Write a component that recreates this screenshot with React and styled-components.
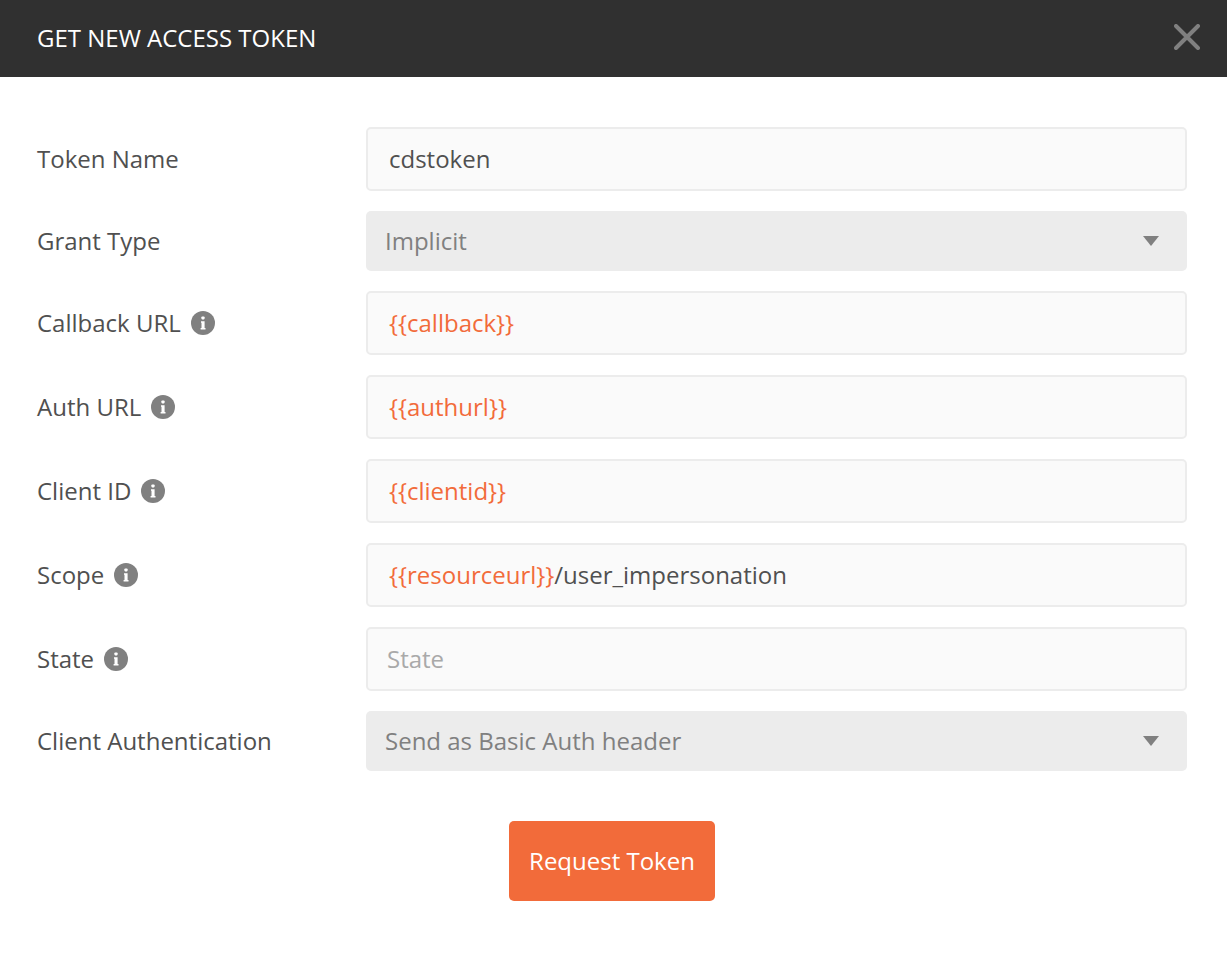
import React from "react";
import styled, { createGlobalStyle } from "styled-components";

const Global = createGlobalStyle`
  html, body { margin: 0; padding: 0; background: #fff; }
  body { font-family: "Open Sans", "Liberation Sans", sans-serif; }
`;
const Page = styled.div`
  width: 1227px;
  height: 977px;
  overflow: hidden;
  background: #fff;
`;
const Header = styled.header`
  height: 77px;
  background: #303030;
  display: flex;
  align-items: center;
  justify-content: space-between;
  padding: 0 27px 0 37px;
`;
const Title = styled.h1`
  margin: 0 0 2px;
  font-size: 24px;
  font-weight: 400;
  color: #fff;
  text-transform: uppercase;
`;
const Close = styled.button`
  border: 0;
  padding: 0;
  margin-bottom: 3px;
  background: none;
  width: 26px;
  height: 26px;
  display: flex;
  svg { display: block; }
`;
const Form = styled.form`
  padding: 50px 40px 0 37px;
  display: flex;
  flex-direction: column;
  gap: 20px;
`;
const Row = styled.div`
  display: grid;
  grid-template-columns: 329px 821px;
  align-items: center;
`;
const Label = styled.div`
  display: flex;
  align-items: center;
  gap: 10px;
  font-size: 24px;
  color: #505050;
`;
const LabelText = styled.span`
  margin-bottom: 2px;
`;
const Info = styled.span`
  width: 24px;
  height: 24px;
  svg { display: block; }
`;
const Field = styled.div`
  box-sizing: border-box;
  height: 64px;
  padding: 0 20px 2px 21px;
  display: flex;
  align-items: center;
  background: #fafafa;
  border: 2px solid #ececec;
  border-radius: 5px;
  font-size: 24px;
  color: #505050;
  white-space: pre;
`;
const Variable = styled.span`
  color: #f26b3a;
`;
const Placeholder = styled.span`
  margin-left: -2px;
  color: #a9a9a9;
`;
const Select = styled.div`
  box-sizing: border-box;
  height: 60px;
  padding: 0 28px 2px 19px;
  display: flex;
  align-items: center;
  justify-content: space-between;
  background: #ececec;
  border-radius: 5px;
  font-size: 24px;
  color: #808080;
`;
const Caret = styled.span`
  width: 0;
  height: 0;
  margin-top: 2px;
  border-left: 8px solid transparent;
  border-right: 8px solid transparent;
  border-top: 10px solid #808080;
`;
const Actions = styled.div`
  display: flex;
  justify-content: center;
  margin-top: 30px;
`;
const Submit = styled.button`
  width: 206px;
  height: 80px;
  border: 0;
  border-radius: 5px;
  background: #f26b3a;
  color: #fff;
  font-family: inherit;
  font-size: 24px;
  padding: 0 0 2px;
`;

const InfoIcon = () => (
  <Info>
    <svg width="24" height="24" viewBox="0 0 24 24">
      <circle cx="12" cy="12" r="12" fill="#808080" />
      <rect x="10.4" y="5.4" width="3.2" height="3" rx="0.8" fill="#fff" />
      <path d="M10 10.2h3.6v6.8h.9v1.6H9.6V17h.9v-5.2H10z" fill="#fff" />
    </svg>
  </Info>
);

const rows = [
  { label: "Token Name", value: <>cdstoken</> },
  { label: "Grant Type", select: "Implicit" },
  { label: "Callback URL", info: true, value: <Variable>{"{{callback}}"}</Variable> },
  { label: "Auth URL", info: true, value: <Variable>{"{{authurl}}"}</Variable> },
  { label: "Client ID", info: true, value: <Variable>{"{{clientid}}"}</Variable> },
  {
    label: "Scope",
    info: true,
    value: (
      <>
        <Variable>{"{{resourceurl}}"}</Variable>/user_impersonation
      </>
    ),
  },
  { label: "State", info: true, value: <Placeholder>State</Placeholder> },
  { label: "Client Authentication", select: "Send as Basic Auth header" },
];

export default function App() {
  return (
    <Page>
      <Global />
      <Header>
        <Title>Get New Access Token</Title>
        <Close type="button" aria-label="Close">
          <svg width="26" height="26" viewBox="0 0 26 26">
            <path d="M2 2l22 22M24 2L2 24" stroke="#808080" strokeWidth="4" strokeLinecap="round" />
          </svg>
        </Close>
      </Header>
      <Form>
        {rows.map((r) => (
          <Row key={r.label}>
            <Label>
              <LabelText>{r.label}</LabelText>
              {r.info && <InfoIcon />}
            </Label>
            {r.select ? (
              <Select>
                {r.select}
                <Caret />
              </Select>
            ) : (
              <Field>{r.value}</Field>
            )}
          </Row>
        ))}
        <Actions>
          <Submit type="button">Request Token</Submit>
        </Actions>
      </Form>
    </Page>
  );
}
